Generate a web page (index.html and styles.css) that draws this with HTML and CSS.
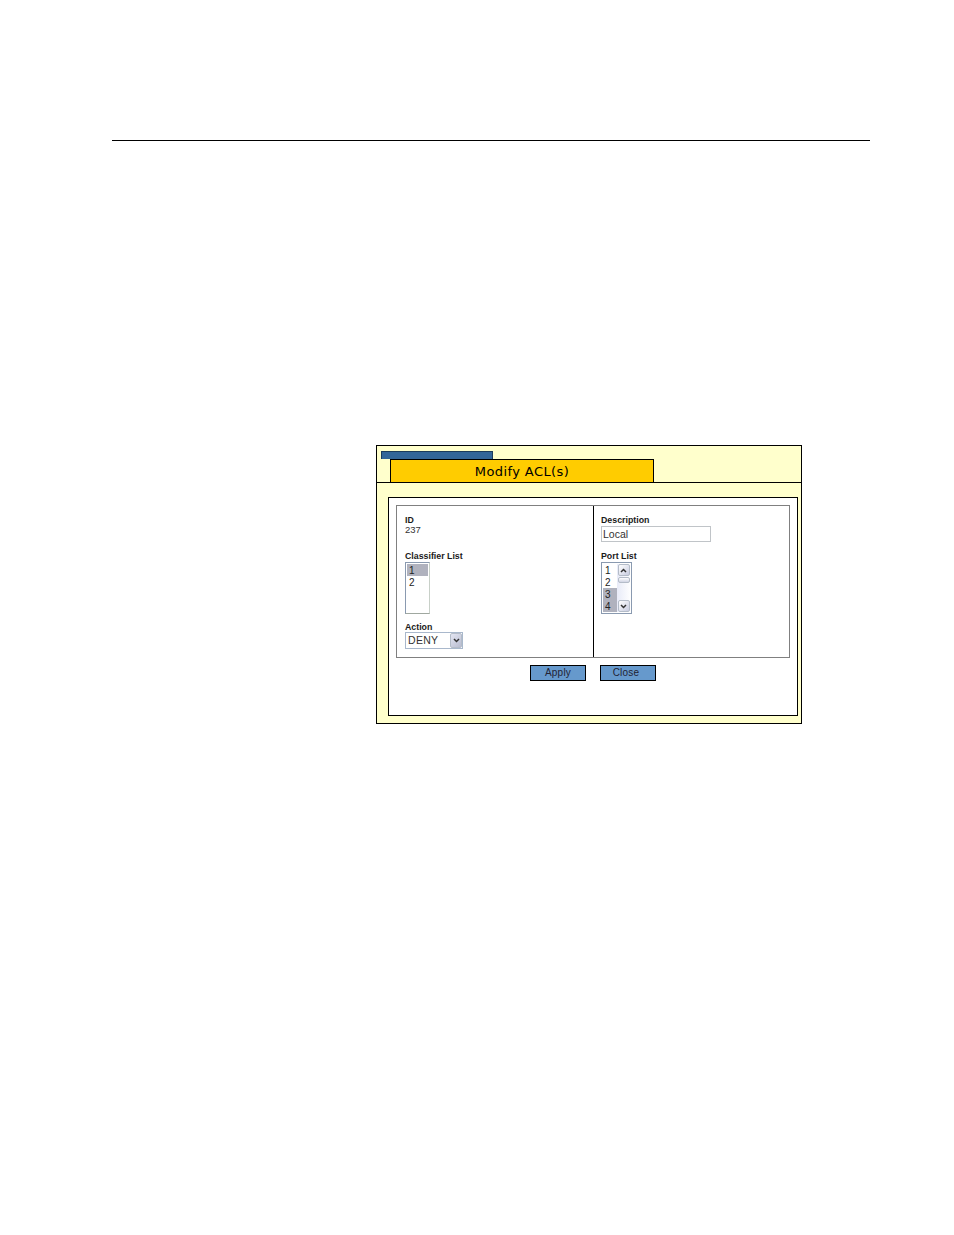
FILE: index.html
```html
<!DOCTYPE html>
<html lang="en">
<head>
    <meta charset="UTF-8">
    <title>Modify ACL(s)</title>
    <link rel="stylesheet" href="styles.css">
</head>
<body>
    <div class="rule"></div>

    <div class="window">
        <div class="header">
            <div class="tab"></div>
            <div class="title">Modify ACL(s)</div>
        </div>

        <div class="panel">
            <div class="fields">
                <div class="col col-left">
                    <div class="label">ID</div>
                    <div class="value">237</div>

                    <div class="label label-classifier">Classifier List</div>
                    <div class="listbox classifier">
                        <div class="item selected">1</div>
                        <div class="item">2</div>
                    </div>

                    <div class="label label-action">Action</div>
                    <div class="dropdown">
                        <span class="dropdown-text">DENY</span>
                        <span class="scroll-btn dropdown-btn">
                            <svg width="7" height="5" viewBox="0 0 7 5"><path d="M1 1l2.500 2.500L6 1" fill="none" stroke="#333" stroke-width="1.500"/></svg>
                        </span>
                    </div>
                </div>

                <div class="col col-right">
                    <div class="label">Description</div>
                    <input class="text-input" type="text" value="Local">

                    <div class="label label-port">Port List</div>
                    <div class="listbox port">
                        <div class="port-items">
                            <div class="item">1</div>
                            <div class="item">2</div>
                            <div class="item selected">3</div>
                            <div class="item selected">4</div>
                        </div>
                        <div class="scrollbar">
                            <span class="scroll-btn">
                                <svg width="7" height="5" viewBox="0 0 7 5"><path d="M1 4l2.500-2.500L6 4" fill="none" stroke="#333" stroke-width="1.500"/></svg>
                            </span>
                            <span class="thumb"></span>
                            <span class="scroll-btn scroll-down">
                                <svg width="7" height="5" viewBox="0 0 7 5"><path d="M1 1l2.500 2.500L6 1" fill="none" stroke="#333" stroke-width="1.500"/></svg>
                            </span>
                        </div>
                    </div>
                </div>
            </div>

            <div class="buttons">
                <button class="btn" type="button">Apply</button>
                <button class="btn btn-close" type="button">Close</button>
            </div>
        </div>
    </div>
</body>
</html>
```

FILE: styles.css
```css
body {
    margin: 0;
    background: #fff;
    font-family: "Liberation Sans", Arial, sans-serif;
    color: #000;
}
.rule {
    height: 1px;
    margin: 140px 84px 0 112px;
    background: #000;
}
.window {
    box-sizing: border-box;
    width: 426px;
    height: 279px;
    margin: 304px 0 0 376px;
    background: #ffffcc;
    border: 1px solid #000;
}
.header {
    box-sizing: border-box;
    height: 37px;
    padding-top: 5px;
    border-bottom: 1px solid #000;
}
.tab {
    box-sizing: border-box;
    width: 112px;
    height: 8px;
    margin-left: 4px;
    background: #336699;
    border: 1px solid #1c3c5c;
    border-bottom: none;
}
.title {
    box-sizing: border-box;
    width: 264px;
    height: 23px;
    margin-left: 13px;
    background: #ffcc00;
    border: 1px solid #000;
    border-bottom: none;
    text-align: center;
    font-family: "DejaVu Sans", Verdana, sans-serif;
    font-size: 13px;
    line-height: 23px;
    letter-spacing: 0.4px;
}
.panel {
    box-sizing: border-box;
    width: 410px;
    height: 219px;
    margin: 14px 0 0 11px;
    padding: 7px;
    background: #fff;
    border: 1px solid #000;
}
.fields {
    box-sizing: border-box;
    display: flex;
    width: 394px;
    height: 153px;
    border: 1px solid #808080;
}
.col {
    box-sizing: border-box;
    padding-top: 9px;
}
.col-left {
    width: 197px;
    padding-left: 8px;
    border-right: 1px solid #000;
}
.col-right {
    flex: 1;
    padding-left: 7px;
}
.label {
    height: 10px;
    font-size: 8.8px;
    line-height: 10px;
    font-weight: bold;
    color: #1a1a1a;
}
.value {
    height: 10px;
    font-size: 9.5px;
    line-height: 10px;
    color: #333;
}
.label-classifier {
    margin-top: 16px;
}
.label-action {
    margin-top: 8px;
}
.label-port {
    margin-top: 9px;
}
.listbox {
    box-sizing: border-box;
    height: 52px;
    margin-top: 1px;
    background: #fff;
    border: 1px solid #8a9ab0;
    border-right-color: #c8d0c8;
    border-bottom-color: #a0a8a0;
    font-size: 10px;
    line-height: 14px;
}
.classifier {
    width: 25px;
    padding: 1px;
}
.port {
    display: flex;
    width: 31px;
    padding: 1px 0 1px 1px;
    border-color: #8a9ab0;
}
.port-items {
    width: 14px;
}
.item {
    height: 12px;
    padding-left: 2px;
    color: #222;
}
.selected {
    background: #b0b2be;
}
.scrollbar {
    display: flex;
    flex-direction: column;
    width: 14px;
    padding-left: 1px;
    background: linear-gradient(to right, #e8ebf8, #fff);
}
.scroll-btn {
    box-sizing: border-box;
    display: flex;
    align-items: center;
    justify-content: center;
    width: 12px;
    height: 12px;
    background: linear-gradient(135deg, #fff, #c8cce0);
    border: 1px solid #b4bcc8;
    border-radius: 2px;
}
.thumb {
    box-sizing: border-box;
    width: 12px;
    height: 6px;
    margin-top: 1px;
    background: linear-gradient(#fff, #d0d4e4);
    border: 1px solid #b4bcc8;
    border-radius: 2px;
}
.scroll-down {
    margin-top: auto;
}
.dropdown {
    box-sizing: border-box;
    display: flex;
    align-items: center;
    justify-content: space-between;
    width: 58px;
    height: 17px;
    background: #fff;
    border: 1px solid #a9b8cc;
}
.dropdown-text {
    padding: 0 0 1px 2px;
    font-size: 10.5px;
    letter-spacing: 0.3px;
    color: #333;
}
.dropdown-btn {
    height: 15px;
    background: linear-gradient(135deg, #e4e6f2, #b8bcd0);
}
.text-input {
    box-sizing: border-box;
    display: block;
    width: 110px;
    height: 16px;
    margin: 1px 0 0;
    padding: 0 1px;
    border: 1px solid #c0c4c8;
    font-family: "Liberation Sans", Arial, sans-serif;
    font-size: 10.5px;
    color: #333;
    outline: none;
}
.buttons {
    display: flex;
    gap: 14px;
    margin: 7px 0 0 134px;
}
.btn {
    box-sizing: border-box;
    width: 56px;
    height: 16px;
    padding: 0 0 1px;
    background: #6699cc;
    border: 1px solid #000;
    font-family: "Liberation Sans", Arial, sans-serif;
    font-size: 10px;
    line-height: 13px;
    letter-spacing: 0.2px;
    color: #223;
}
.btn-close {
    padding-right: 4px;
}
```
